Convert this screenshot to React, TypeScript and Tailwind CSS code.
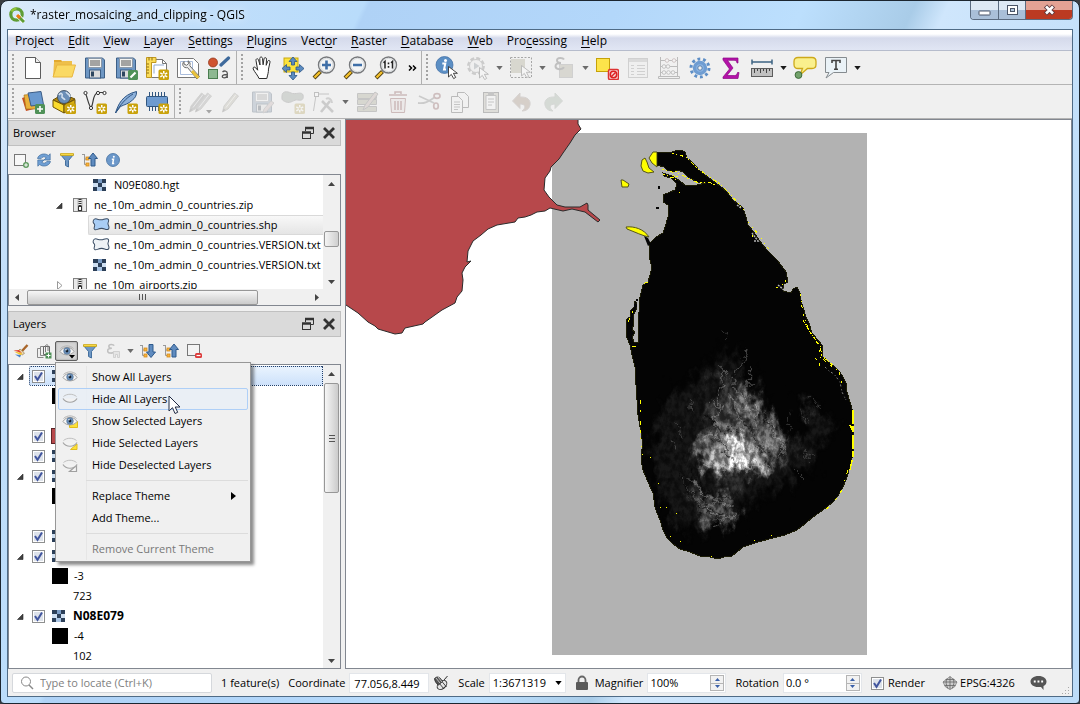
import React, { useState } from "react";

type IconProps = { children: React.ReactNode; size?: "sm" | "md" | "lg"; dim?: boolean };

const sizes = { sm: "size-4", md: "size-[18px]", lg: "size-6" };

function Icon({ children, size = "lg", dim = false }: IconProps) {
  return (
    <svg
      viewBox={size === "lg" ? "0 0 24 24" : "0 0 16 16"}
      className={`${sizes[size]} shrink-0 ${dim ? "opacity-30 saturate-50" : ""}`}
      fill="none"
      aria-hidden="true"
    >
      {children}
    </svg>
  );
}

/* ---------- shared icon parts ---------- */

const NewBadge = () => (
  <g>
    <rect x="13.5" y="13.5" width="10.500" height="10.500" rx="1.5" fill="#c9a20c" />
    <path d="M18.750 15v7.500M15.300 16.800l6.900 4M22.200 16.800l-6.900 4" stroke="#fff" strokeWidth="1.5" />
    <circle cx="18.750" cy="18.800" r="1.2" fill="#c9a20c" />
  </g>
);

const Floppy = () => (
  <g>
    <path d="M2.5 2h17l2 2v18h-19z" fill="#6e97c4" stroke="#3d5f86" />
    <rect x="5.500" y="2.500" width="13" height="9" fill="#f3f3f0" stroke="#8a98a8" />
    <path d="M7 5h10M7 7h10M7 9h10" stroke="#555" />
    <rect x="6.500" y="14" width="11" height="8" fill="#dcdcdc" stroke="#3d5f86" />
    <rect x="8" y="15.500" width="3" height="5" fill="#2e4760" />
  </g>
);

const Loupe = ({ children }: { children: React.ReactNode }) => (
  <g>
    <path d="M8.500 15.500 2 22" stroke="#4a3b10" strokeWidth="4" />
    <path d="M8 16 2.500 21.500" stroke="#f4c12c" strokeWidth="2.400" />
    <circle cx="14.500" cy="9" r="8" fill="#f4f5f6" stroke="#77797c" strokeWidth="1.400" />
    <circle cx="14.500" cy="9" r="6.600" stroke="#d5d8da" />
    {children}
  </g>
);

const Pointer = ({ x = 12, y = 11 }: { x?: number; y?: number }) => (
  <path
    transform={`translate(${x} ${y})`}
    d="M.5.5v10.500l2.800-2.600 2.400 4.200 2-1.200L5.400 7.300h4z"
    fill="#fff"
    stroke="#333"
    strokeWidth=".9"
  />
);

const Pencil = ({ tone = "#d6d3c4" }: { tone?: string }) => (
  <g>
    <path d="m3.500 22 1.500-6L15.500 3l4 3L9 19z" fill={tone} stroke="#8f8d85" />
    <path d="m3.500 22 1-3.600 2 1.600z" fill="#666" />
    <path d="m7 17.500 10-13" stroke="#fff" strokeOpacity=".7" />
  </g>
);

const EyeGlyph = () => (
  <g>
    <path d="M1 8.500C4 3 12 3 15 8.500 12 13 4 13 1 8.500z" fill="#f6f6f6" stroke="#a3a3a3" />
    <path d="M1.500 5.500C5 2 11 2 14.500 5.500" stroke="#b5b5b5" />
    <circle cx="8" cy="8" r="3.300" fill="#6e93bd" stroke="#45668c" strokeWidth=".6" />
    <circle cx="8" cy="8" r="1.400" fill="#15202c" />
    <circle cx="7" cy="6.800" r=".7" fill="#fff" />
  </g>
);

const ClosedEyeGlyph = () => (
  <g stroke="#a3a3a3">
    <path d="M1.500 5.500C5 2.500 11 2.500 14.500 5.500" stroke="#c0c0c0" />
    <path d="M1 7.500C4 12.500 12 12.500 15 7.500" fill="#f2f2f2" strokeWidth="1.200" />
  </g>
);

const Epsilon = ({ size = 17 }: { size?: number }) => (
  <path
    transform={`scale(${size / 17})`}
    d="M12 3.500c-1-2-7-2.500-7 .8 0 2 2 2.700 4 2.700-3.500 0-5.500 1-5.500 3.300 0 3.700 7 3.700 8.500 1"
    stroke="#555"
    strokeWidth="2"
  />
);

const RasterGlyph = () => (
  <g shapeRendering="crispEdges">
    <rect x="1" y="2" width="13" height="12" fill="#a9c4e3" />
    <path d="M1 2h5v4H1zM10 2h4v4h-4zM6 6h4v4H6zM1 10h4v4H1zM10 10h4v4h-4z" fill="#2c3f58" />
    <path d="M10 6h4v4h-4zM1 6h5v4H1z" fill="#cfdff1" />
    <path d="M6 2h4v4H6z" fill="#7b9dc6" />
  </g>
);

const PolyGlyph = ({ fill }: { fill: string }) => (
  <path
    d="M1 5c0-2.200 1.800-2.900 3.800-2.200 2 .7 3.700.9 5.700.1 2.200-.9 4.500-.5 4.300 1.300-.1 1.200-.8 1.700-.6 2.900.2 1.300 1.100 2 .9 3.500-.2 1.800-2 1.700-3.900.9-2.200-.9-4.400-.5-6.400.4-1.800.8-3.600.3-2.800-1.900.5-1.300.7-1.700.2-2.600C1.800 6.700 1 6.300 1 5z"
    fill={fill}
    stroke="#3d4f66"
    strokeWidth=".9"
  />
);

const ZipGlyph = () => (
  <g>
    <rect x="1.500" y="1.500" width="13" height="13" fill="#e9e9e9" stroke="#808080" />
    <path d="M6 2v12M10 2v12" stroke="#b5b5b5" />
    <path d="M8 2v8" stroke="#333" strokeWidth="3" strokeDasharray="1 1" />
    <rect x="6.500" y="9.500" width="3" height="4" fill="#fff" stroke="#333" />
  </g>
);

const Funnel = () => (
  <g>
    <path d="M1.500 2.500h13L9.500 8.500V15l-3-1.500v-5z" fill="#6e97c4" stroke="#44709f" />
    <path d="M1.500 1.500h13v2h-13z" fill="#f7d844" stroke="#c9a20c" strokeWidth=".7" />
  </g>
);

const TreeArrow = ({ up }: { up: boolean }) => (
  <g>
    <path d="M0 2.500h3M2.500 2.500v10M2.500 7h3M2.500 12.500h3" stroke="#999" />
    <rect x="4" y="5" width="3" height="3" fill="#f7b43c" stroke="#d58a1c" strokeWidth=".8" />
    <rect x="4" y="11" width="3" height="3" fill="#f7b43c" stroke="#d58a1c" strokeWidth=".8" />
    <path
      d={up ? "M11 1 15.500 6.500H13V14H9V6.500H6.500z" : "M11 14.500 15.500 9H13V1.500H9V9H6.500z"}
      fill="#5f8bbf"
      stroke="#2f5a8c"
    />
  </g>
);

/* ---------- controls ---------- */

function Tool({ label, children, disabled }: { label: string; children: React.ReactNode; disabled?: boolean }) {
  return (
    <button aria-label={label} disabled={disabled} className="flex h-8 w-[31px] items-center justify-center">
      <Icon dim={disabled}>{children}</Icon>
    </button>
  );
}

function More({ label, dim }: { label: string; dim?: boolean }) {
  return (
    <button aria-label={label} className="flex h-8 w-3 items-center justify-center">
      <svg viewBox="0 0 8 5" className="h-1 w-[7px]" aria-hidden="true">
        <path d="M0 0h8L4 5z" fill={dim ? "#6b6b6b" : "#1a1a1a"} />
      </svg>
    </button>
  );
}

function Handle() {
  return (
    <svg viewBox="0 0 9 28" className="h-7 w-[9px] shrink-0" aria-hidden="true">
      <path d="M5 0v28" stroke="#a3a3a3" strokeWidth="2" strokeDasharray="2 2" />
    </svg>
  );
}

function SmallTool({ label, children, dim }: { label: string; children: React.ReactNode; dim?: boolean }) {
  return (
    <button aria-label={label} className="flex h-5 w-[23px] items-center justify-center">
      <Icon size="sm" dim={dim}>
        {children}
      </Icon>
    </button>
  );
}

function TickBox({ label, text }: { label: string; text?: string }) {
  return (
    <label className="flex items-center gap-1">
      <span className="grid size-[13px]">
        <input
          type="checkbox"
          defaultChecked
          aria-label={label}
          className="peer col-start-1 row-start-1 size-[13px] appearance-none border border-[#8e8f8f] bg-[#dde2ea] outline outline-1 -outline-offset-2 outline-white"
        />
        <svg
          viewBox="0 0 13 13"
          className="pointer-events-none invisible col-start-1 row-start-1 peer-checked:visible"
          aria-hidden="true"
        >
          <path d="m3 6 2.500 3.800L10 2.500" fill="none" stroke="#42569e" strokeWidth="2" />
        </svg>
      </span>
      {text}
    </label>
  );
}

function PanelHeader({ title }: { title: string }) {
  return (
    <div className="flex h-[26px] shrink-0 items-center border border-[#c0c0c0] bg-[#dadada] pl-1">
      <h2 className="flex-1">{title}</h2>
      <button aria-label={`Float ${title}`} className="flex w-5 justify-center">
        <svg viewBox="0 0 14 14" className="size-3.5" fill="none" aria-hidden="true">
          <path d="M4.500 5V1.500h8v6H9" stroke="#333" />
          <path d="M4 2h9" stroke="#333" strokeWidth="2.500" />
          <rect x="1.500" y="6.500" width="8" height="6" stroke="#333" />
          <path d="M1 6.500h9" stroke="#333" strokeWidth="2.500" />
        </svg>
      </button>
      <button aria-label={`Close ${title}`} className="flex w-[22px] justify-center">
        <svg viewBox="0 0 14 14" className="size-3.5" aria-hidden="true">
          <path d="m2 2 10 10M12 2 2 12" stroke="#333" strokeWidth="2.800" />
        </svg>
      </button>
    </div>
  );
}

function ScrollArrow({ dir }: { dir: "up" | "down" | "left" | "right" }) {
  const d = { up: "M0 6h7L3.500 2z", down: "M0 2h7L3.500 6z", left: "M5 0v7L1 3.500z", right: "M2 0v7l4-3.500z" }[dir];
  return (
    <button aria-label={`Scroll ${dir}`} className="flex size-4 shrink-0 items-center justify-center">
      <svg viewBox="0 0 7 7" className="size-[7px]" aria-hidden="true">
        <path d={d} fill="#444" />
      </svg>
    </button>
  );
}

const Twist = ({ open }: { open: boolean }) => (
  <svg viewBox="0 0 9 9" className="size-[9px] shrink-0" aria-hidden="true">
    {open ? (
      <path d="M7 2v5.500H1.500z" fill="#404040" stroke="#262626" strokeWidth=".6" />
    ) : (
      <path d="m2.500.5 4.500 4-4.500 4z" fill="#fff" stroke="#999" />
    )}
  </svg>
);

/* ---------- title bar and menus ---------- */

function QgisLogo() {
  return (
    <svg viewBox="0 0 16 16" className="size-4" fill="none" aria-hidden="true">
      <circle cx="7.500" cy="7.500" r="5.700" stroke="#5f9d35" strokeWidth="3.200" />
      <path d="M2.500 4.500a6 6 0 0 1 5-3" stroke="#93c53a" strokeWidth="2" />
      <path d="m8 8 7 7" stroke="#fff" strokeWidth="4.500" />
      <path d="m8.500 8.500 6.500 6.500" stroke="#5f9d35" strokeWidth="3" />
      <path d="m8 8 3 3" stroke="#ee7913" strokeWidth="3" />
    </svg>
  );
}

function TitleBar() {
  return (
    <header className="flex h-7 shrink-0 items-start justify-between">
      <div className="flex h-7 items-center gap-[5px] pl-0.5">
        <QgisLogo />
        <h1 className="drop-shadow-[0_0_4px_#ffffff]">*raster_mosaicing_and_clipping - QGIS</h1>
      </div>
      <div className="flex h-[19px] overflow-hidden rounded-b border border-t-0 border-[#5a6b80]">
        <button
          aria-label="Minimize"
          className="flex w-7 items-center justify-center border-r border-[#5a6b80] bg-linear-to-b from-[#dde9f5] from-50% to-[#a9bfd8] to-50%"
        >
          <svg viewBox="0 0 13 12" className="h-3 w-[13px]" aria-hidden="true">
            <rect x="1" y="7" width="11" height="4" rx=".5" fill="#fff" stroke="#4a5568" />
          </svg>
        </button>
        <button
          aria-label="Maximize"
          className="flex w-[27px] items-center justify-center border-r border-[#5a6b80] bg-linear-to-b from-[#dde9f5] from-50% to-[#a9bfd8] to-50%"
        >
          <svg viewBox="0 0 13 12" className="h-3 w-[13px]" aria-hidden="true">
            <rect x="1.500" y="1.500" width="10" height="9" fill="#fff" stroke="#4a5568" />
            <rect x="4.500" y="4.500" width="4" height="3" fill="#b5c8de" stroke="#4a5568" />
          </svg>
        </button>
        <button
          aria-label="Close"
          className="flex w-[46px] items-center justify-center bg-linear-to-b from-[#e3a294] from-50% to-[#bb3a22] to-50%"
        >
          <svg viewBox="0 0 13 12" className="h-3 w-[13px]" aria-hidden="true">
            <path d="m2.500 2 8 8M10.500 2l-8 8" stroke="#5b3a3f" strokeWidth="4.500" />
            <path d="m3 2.500 7 7M10 2.500l-7 7" stroke="#fff" strokeWidth="2.600" />
          </svg>
        </button>
      </div>
    </header>
  );
}

const menus: [string, string, string][] = [
  ["Pro", "j", "ect"],
  ["", "E", "dit"],
  ["", "V", "iew"],
  ["", "L", "ayer"],
  ["", "S", "ettings"],
  ["", "P", "lugins"],
  ["Vect", "o", "r"],
  ["", "R", "aster"],
  ["", "D", "atabase"],
  ["", "W", "eb"],
  ["Pro", "c", "essing"],
  ["", "H", "elp"],
];

function MenuBar() {
  return (
    <nav className="flex h-[21px] shrink-0 border-b border-[#b6bccc] bg-linear-to-b from-white from-20% via-[#d5daeb] via-40% to-[#e1e6f4] pt-0.5">
      {menus.map(([a, key, b]) => (
        <button key={a + key + b} className="px-[7px]">
          {a}
          <u className="underline-offset-2">{key}</u>
          {b}
        </button>
      ))}
    </nav>
  );
}

/* ---------- toolbars ---------- */

const Bar = ({ children }: { children: React.ReactNode }) => (
  <div className="flex h-[34px] shrink-0 border-b border-[#b4b4b4]">{children}</div>
);

const Group = ({ children, last }: { children: React.ReactNode; last?: boolean }) => (
  <div className={`flex items-center ${last ? "" : "border-r border-[#b0b0b0] pr-0.5"}`}>
    <Handle />
    {children}
  </div>
);

function MainToolbar() {
  return (
    <Bar>
      <Group>
        <Tool label="New project">
          <path d="M4.500 1.500h10l5 5v16h-15z" fill="#fff" stroke="#5c5c5c" />
          <path d="M14.500 1.500v5h5" fill="#eee" stroke="#5c5c5c" />
        </Tool>
        <Tool label="Open project">
          <path d="M2 6V4h7l2 2h9v4H2z" fill="#e2a92f" />
          <path d="M1 21 2 6h7l2-1h9v4" fill="#eebf4a" />
          <path d="M1 21 5 9h18.500L20 21z" fill="#fad964" stroke="#e9b63e" />
        </Tool>
        <Tool label="Save project">
          <Floppy />
        </Tool>
        <Tool label="Save project as">
          <Floppy />
          <rect x="14" y="14" width="10" height="10" rx="1.500" fill="#4f9158" />
          <path d="m16.500 21.500 5-5" stroke="#fff" strokeWidth="2.200" />
        </Tool>
        <Tool label="New print layout">
          <path d="M6.500 3.500h11l4 4v14h-15z" fill="#fff" stroke="#777" />
          <path d="M17.500 3.500v4h4" stroke="#777" />
          <path d="M1.500 1.500h9.500v5H6.500v15h-5z" fill="#fbdc58" stroke="#c09820" />
          <path d="M4 1.500v3M7 1.500v3M1.500 8h2.500M1.500 11h2.500M1.500 14h2.500M1.500 17h2.500" stroke="#8f6f10" />
          <path d="M9 17.500V9h10" stroke="#8fa9cf" />
          <NewBadge />
        </Tool>
        <Tool label="Layout manager">
          <path d="M1.500 2.500h16l5 5v14h-21z" fill="#fff" stroke="#777" />
          <path d="M4.500 5.500h12v13h-12z" stroke="#a9bcdc" />
          <path
            d="M8 5.500c-2 2-1.500 5 1 6 1 .4 2 .2 2.500 0L21 23l2.500-2.500L13.800 9.800c.8-2 .2-4-1.800-5l.5 3-2 1.500-2.500-1.300z"
            fill="#ececec"
            stroke="#6a6a6a"
          />
          <path d="m16 15 6.500 7" stroke="#e9c23a" strokeWidth="3" />
        </Tool>
        <Tool label="Style manager">
          <circle cx="6" cy="6.500" r="4.500" fill="#cf5430" stroke="#94391d" strokeWidth=".8" />
          <path d="m14 9 7.500-7" stroke="#3f6a9c" strokeWidth="3.200" strokeLinecap="round" />
          <rect x="1.500" y="13.500" width="9" height="9" fill="#8db891" stroke="#4a7d50" />
          <path
            d="M15.500 16c1.500-1.600 4.800-1.300 4.800 1.200V22M20.300 18.500c-3 0-5 .2-5 1.900 0 1.900 3.700 1.900 5-.3"
            stroke="#555"
            strokeWidth="1.300"
          />
        </Tool>
      </Group>
      <Group>
        <Tool label="Pan map">
          <path
            d="M8 22.500c-1-3-4.500-6.500-5.800-9.500-.7-2 1.500-2.500 2.500-1.200l2 2.400L5 4.500c-.3-2 2-2.400 2.500-.6L9 9 8.800 2.500c0-2 2.500-2 2.700 0l.6 6.300.9-6c.3-1.800 2.700-1.400 2.500.4L15.200 9.300l1.500-4c.6-1.600 2.700-.9 2.300.8l-1.500 7c0 3.500-.8 5.500-1.700 9.400z"
            transform="translate(1 0)"
            fill="#fff"
            stroke="#2b2b2b"
            strokeWidth="1"
          />
        </Tool>
        <Tool label="Pan map to selection">
          <rect x="3" y="2" width="14" height="14" fill="#fbe33d" stroke="#c9a80c" />
          <path
            d="M12 1 16 5.500h-2.500V9h-3V5.500H8zM12 24l-4-4.500h2.500V16h3v3.500H16zM1 12.500l4.500-4V11H9v3H5.500v2.500zM23 12.500l-4.500-4V11H15v3h3.500v2.500z"
            fill="#5b8bc0"
            stroke="#2c5687"
            strokeWidth=".8"
          />
        </Tool>
        <Tool label="Zoom in">
          <Loupe>
            <path d="M14.500 4.500v9M10 9h9" stroke="#3f6fa8" strokeWidth="2.600" />
          </Loupe>
        </Tool>
        <Tool label="Zoom out">
          <Loupe>
            <path d="M10 9h9" stroke="#3f6fa8" strokeWidth="2.600" />
          </Loupe>
        </Tool>
        <Tool label="Zoom to native resolution">
          <Loupe>
            <path d="M9.500 6.800 11 5.500V12.500M17 6.800l1.500-1.300v7" stroke="#222" strokeWidth="1.500" />
            <path d="M14.500 6.500v1.800M14.500 10v1.800" stroke="#222" strokeWidth="1.600" />
          </Loupe>
        </Tool>
        <button aria-label="More tools" className="flex h-8 w-[18px] items-center justify-center pl-1">
          <svg viewBox="0 0 9 8" className="h-2 w-[9px]" fill="none" aria-hidden="true">
            <path d="m1 1.500 2.500 2.500L1 6.500M5 1.500 7.500 4 5 6.500" stroke="#000" strokeWidth="1.500" />
          </svg>
        </button>
      </Group>
      <Group last>
        <Tool label="Identify features">
          <circle cx="9.500" cy="9" r="8.500" fill="#5c8fc4" stroke="#3c6ca3" strokeWidth=".7" />
          <circle cx="10.500" cy="4.500" r="1.500" fill="#fff" />
          <path d="M7.300 7.500h3l-1.300 6h2" stroke="#fff" strokeWidth="2" />
          <Pointer x={13} y={10} />
        </Tool>
        <Tool label="Run feature action" disabled>
          <circle cx="10" cy="10" r="7.700" stroke="#777" strokeWidth="2.400" strokeDasharray="4 2.050" />
          <circle cx="10" cy="10" r="6.500" fill="#eee" stroke="#777" />
          <path d="M8 6.500 13.500 10 8 13.500z" fill="#789" />
          <Pointer x={13} y={11} />
        </Tool>
        <More label="Actions" dim />
        <Tool label="Select features" disabled>
          <rect x="2" y="3" width="14" height="14" fill="#a89f6c" />
          <path d="M1.500 1.500h21v20h-21z" stroke="#000" strokeDasharray="2 1.500" />
          <Pointer x={12} y={9} />
        </Tool>
        <More label="Selection modes" dim />
        <Tool label="Select by expression" disabled>
          <rect x="7.500" y="8.500" width="13" height="13" fill="#a89f78" stroke="#888" />
          <Epsilon />
        </Tool>
        <More label="Expression options" dim />
        <Tool label="Deselect features">
          <rect x="1.500" y="2.500" width="13" height="13" fill="#fde44a" stroke="#c6a208" />
          <rect x="13.500" y="13.500" width="10" height="10" rx="1.500" fill="#f8dcdc" stroke="#d33" strokeWidth="1.500" />
          <circle cx="18.500" cy="18.500" r="3.200" stroke="#d22" strokeWidth="1.600" />
          <path d="m16.500 20.500 4-4" stroke="#d22" strokeWidth="1.500" />
        </Tool>
        <Tool label="Attribute table" disabled>
          <rect x="2.500" y="2.500" width="19" height="19" fill="#eee" stroke="#888" />
          <path d="M3 4.500h18" stroke="#aaa" strokeWidth="3" />
          <path d="M5 9.500h3M11 9.500h8M5 12.500h3M11 12.500h8M5 15.500h3M11 15.500h8M5 18.500h3M11 18.500h8" stroke="#888" />
        </Tool>
        <Tool label="Field calculator" disabled>
          <path d="M3.500 1v20M20.500 1v20M3 4.500h18M3 10.500h18M3 16.500h18M1.500 20.500h21v2h-21z" stroke="#444" />
          <g fill="#fff" stroke="#555">
            <circle cx="10" cy="4.500" r="1.800" stroke="#955" />
            <circle cx="17" cy="4.500" r="1.800" stroke="#955" />
            <circle cx="7" cy="10.500" r="1.800" />
            <circle cx="11" cy="10.500" r="1.800" />
            <circle cx="7" cy="16.500" r="1.800" />
            <circle cx="11.500" cy="16.500" r="1.800" />
            <circle cx="16" cy="16.500" r="1.800" />
          </g>
        </Tool>
        <Tool label="Toolbox">
          <circle cx="12" cy="12" r="9" stroke="#5d8ec6" strokeWidth="3" strokeDasharray="2.800 2.855" />
          <circle cx="12" cy="12" r="5.500" fill="#8db4e2" stroke="#6f9dd2" strokeWidth="3.400" />
          <circle cx="12" cy="12" r="2.200" fill="#f0f0f0" stroke="#44709f" strokeWidth=".8" />
        </Tool>
        <Tool label="Statistical summary">
          <path
            d="M19 2v5h-1c-.3-2-1.200-2.700-3-2.700H8.500L14 12l-6 7.500h7.500c1.800 0 2.500-1 3-3H20L19 22.500H4V21l6.500-8L4 4V2z"
            fill="#b412a8"
            stroke="#8b0a84"
            strokeWidth=".7"
          />
        </Tool>
        <Tool label="Measure line">
          <path d="M2 6h20M2 3.500v5M22 3.500v5" stroke="#3d6382" strokeWidth="1.500" />
          <rect x="1.500" y="12.500" width="21" height="8" fill="#c0c0c0" stroke="#5c5c5c" />
          <path d="M4.500 13v4M7.500 13v2M10.500 13v4M13.500 13v2M16.500 13v4M19.500 13v2" stroke="#444" />
        </Tool>
        <More label="Measure modes" />
        <Tool label="Map tips">
          <path
            d="M5 1.500h14c2.500 0 4 1.500 4 4v3c0 2.500-1.500 4-4 4h-4.500L7 19l2.500-6.500H5c-2.500 0-4-1.500-4-4v-3c0-2.500 1.500-4 4-4z"
            fill="#faf08d"
            stroke="#cda91a"
            strokeWidth="1.300"
          />
          <circle cx="5.500" cy="19" r="3.400" fill="#73a26c" stroke="#3e6b38" />
        </Tool>
        <Tool label="Text annotation">
          <path d="M1.500 1.500h21v15h-13L2 22l3-5.500H1.500z" fill="#eaf2f7" stroke="#858b8f" />
          <path d="M8 7V4.500h8V7M12 4.500V13M10 13.300h4" stroke="#444" strokeWidth="1.600" />
        </Tool>
        <More label="Annotation tools" />
      </Group>
    </Bar>
  );
}

function EditToolbar() {
  return (
    <Bar>
      <Group>
        <Tool label="Data source manager">
          <path d="m1 8 12-4 4 14-12 3z" fill="#c64f22" />
          <path d="m3 5 12-1 2 15H5z" fill="#eab13a" stroke="#a8741a" strokeWidth=".7" />
          <path d="m7 3 13-1.500 2.500 13L10 16z" fill="#6a99cf" stroke="#3c5d86" />
          <rect x="14" y="14" width="10" height="10" rx="1.500" fill="#4f9158" />
          <path d="M19 16v6M16 19h6" stroke="#fff" strokeWidth="1.600" />
        </Tool>
        <Tool label="New GeoPackage layer">
          <path d="m1 10 10-6 12 5-11 6z" fill="#b3880b" stroke="#6d5206" />
          <circle cx="12" cy="7" r="6.500" fill="#6b8fb8" stroke="#345" strokeWidth=".8" />
          <path d="M7 5c2-3 4-1 3 1s2 2 3 4M14 2c1 2 4 2 4 5" stroke="#d3e0ee" strokeWidth="1.600" />
          <path d="m1 10 11 5v8L1 17z" fill="#fbdb2c" stroke="#6d5206" />
          <path d="m12 15 11-5.500V17l-11 6z" fill="#d8ae13" stroke="#6d5206" />
          <NewBadge />
        </Tool>
        <Tool label="New shapefile layer">
          <path d="M2.500 3.500c2 4 3 12 5.500 14C11 14 9 4 15 2.500h6" stroke="#3c3c3c" strokeWidth="1.200" />
          <g fill="#fff" stroke="#333">
            <circle cx="2.500" cy="3" r="1.600" />
            <circle cx="8" cy="18" r="1.600" />
            <circle cx="15" cy="3" r="1.600" />
            <circle cx="21.500" cy="3" r="1.600" />
          </g>
          <NewBadge />
        </Tool>
        <Tool label="New SpatiaLite layer">
          <path d="M1.500 23C4 15 8 5 22.500 1.500c.5 4-2 7-4 8.500-4 4-8 4.500-12 6.500z" fill="#8eb1da" stroke="#2f5684" />
          <path d="M1.500 23C6 15 12 8 19 4" stroke="#2f5684" />
          <NewBadge />
        </Tool>
        <Tool label="New temporary layer">
          <path d="M4.500 2v19M7.500 2v19M10.500 2v19M13.500 2v19M16.500 2v19M19.500 2v19" stroke="#31567f" />
          <rect x="1.500" y="6.500" width="21" height="10" rx="1" fill="#6e9bd0" stroke="#31567f" />
          <NewBadge />
        </Tool>
      </Group>
      <Group last>
        <Tool label="Current edits" disabled>
          <g transform="translate(-2 0)">
            <Pencil tone="#888" />
          </g>
          <g transform="translate(4 0)">
            <Pencil tone="#999" />
          </g>
          <path d="M18 20h6l-3 3.500z" fill="#000" />
        </Tool>
        <Tool label="Toggle editing" disabled>
          <Pencil tone="#b5b08f" />
        </Tool>
        <Tool label="Save layer edits" disabled>
          <Floppy />
          <path d="m13 23 1-4 7-8 3 2-7 8z" fill="#caa" stroke="#888" />
        </Tool>
        <Tool label="Add polygon feature" disabled>
          <path d="M1 6c0-5 5-5 9-3s11-2 12 2-1 6-5 5-7 4-12 2-4-3-4-6z" fill="#8b9a86" stroke="#777" />
          <NewBadge />
        </Tool>
        <Tool label="Vertex tool" disabled>
          <path d="M4 5 1.500 21M4 4h13" stroke="#666" />
          <rect x="2.500" y="2.500" width="4" height="4" fill="#fff" stroke="#555" />
          <path d="m9 22 9-11M10 11l11 11" stroke="#777" strokeWidth="2.600" />
          <path d="M14 9c3-2 6 1 6 4" stroke="#888" strokeWidth="2" />
        </Tool>
        <More label="Vertex tools" dim />
        <Tool label="Modify attributes" disabled>
          <path d="M2.500 3.500h19v5h-19zM2.500 9.500h19v5h-19zM2.500 16.500h19v5h-19z" fill="#a3a272" stroke="#666" />
          <path d="m8 20 2-5 10-13 3 2-10 13z" fill="#c9a090" stroke="#666" />
        </Tool>
        <Tool label="Delete selected" disabled>
          <path d="M4.500 8.500h15l-1 14h-13z" fill="#eadada" stroke="#a33" />
          <path d="M3 5h18M9 4V2h6v2M9 11v9M12 11v9M15 11v9" stroke="#a33" strokeWidth="1.500" />
        </Tool>
        <Tool label="Cut features" disabled>
          <path d="m2 6 15 7M1 13c7 1 11-2 17-6" stroke="#777" strokeWidth="1.800" />
          <ellipse cx="20" cy="6" rx="3" ry="2.300" stroke="#a44" strokeWidth="1.700" />
          <ellipse cx="19" cy="16" rx="2.300" ry="3" stroke="#a44" strokeWidth="1.700" />
        </Tool>
        <Tool label="Copy features" disabled>
          <path d="M9.500 2.500h7l4 4v11h-11z" fill="#f6f6f6" stroke="#444" />
          <path d="M3.500 6.500h7l4 4v12h-11z" fill="#f6f6f6" stroke="#444" />
          <path d="M6 12h6M6 14.500h6M6 17h6M6 19.500h4" stroke="#666" />
        </Tool>
        <Tool label="Paste features" disabled>
          <rect x="4.500" y="2.500" width="15" height="20" fill="#b9b39c" stroke="#444" />
          <path d="M7 5.500h10v14H7z" fill="#f7f7f7" stroke="#666" />
          <path d="M9 2h6v3H9z" fill="#666" />
          <path d="M9 9h6M9 12h6M9 15h4" stroke="#666" />
        </Tool>
        <Tool label="Undo" disabled>
          <path d="M10 3v4c7-.5 11 3 10 8-.8 4-4 6-8 6 4-3 4-7-2-7v4.500L2.500 11z" fill="#b0805f" stroke="#a08a80" />
        </Tool>
        <Tool label="Redo" disabled>
          <path d="M14 3v4C7 6.500 3 10 4 15c.8 4 4 6 8 6-4-3-4-7 2-7v4.500l7.500-7.500z" fill="#8fae8f" stroke="#8f9f90" />
        </Tool>
      </Group>
    </Bar>
  );
}

/* ---------- browser panel ---------- */

type Row = { name: string; kind: "raster" | "zip" | "shp" | "txt"; depth: 1 | 2; open?: boolean; selected?: boolean };

const rows: Row[] = [
  { name: "N09E080.hgt", kind: "raster", depth: 2 },
  { name: "ne_10m_admin_0_countries.zip", kind: "zip", depth: 1, open: true },
  { name: "ne_10m_admin_0_countries.shp", kind: "shp", depth: 2, selected: true },
  { name: "ne_10m_admin_0_countries.VERSION.txt", kind: "txt", depth: 2 },
  { name: "ne_10m_admin_0_countries.VERSION.txt", kind: "raster", depth: 2 },
  { name: "ne_10m_airports.zip", kind: "zip", depth: 1, open: false },
];

function BrowserPanel() {
  return (
    <section className="flex h-[186px] shrink-0 flex-col">
      <PanelHeader title="Browser" />
      <div className="flex h-7 shrink-0 items-center pl-px">
        <SmallTool label="Add layer">
          <rect x="1.500" y="2.500" width="11" height="11" fill="#f7f7f7" stroke="#777" />
          <circle cx="13" cy="13" r="3" fill="#5f9a5f" />
          <path d="M13 11.200v3.600M11.200 13h3.600" stroke="#fff" />
        </SmallTool>
        <SmallTool label="Refresh">
          <path
            d="M1.500 6.500C2.500 2 9 .5 12.300 3.500l1.900-1.700V8H8l2.200-2.200C8.500 4.200 6 4.700 5 6.800z"
            fill="#6f9fd4"
            stroke="#44709f"
            strokeWidth=".7"
          />
          <path
            d="M14.500 9.500c-1 4.500-7.500 6-10.800 3l-1.900 1.700V8H8l-2.200 2.200C7.500 11.800 10 11.300 11 9.200z"
            fill="#6f9fd4"
            stroke="#44709f"
            strokeWidth=".7"
          />
        </SmallTool>
        <SmallTool label="Filter browser">
          <Funnel />
        </SmallTool>
        <SmallTool label="Collapse all">
          <TreeArrow up />
        </SmallTool>
        <SmallTool label="Show properties">
          <circle cx="8" cy="8" r="6.500" fill="#6c98ca" stroke="#44709f" strokeWidth=".8" />
          <circle cx="8.800" cy="4.700" r="1" fill="#fff" />
          <path d="M6.800 7.200h1.700l-.8 4.300h1.500" stroke="#fff" strokeWidth="1.500" />
        </SmallTool>
      </div>
      <div className="flex min-h-0 flex-1 flex-col border border-[#828790] bg-white">
        <div className="flex min-h-0 flex-1">
          <ul className="min-w-0 flex-1 overflow-hidden">
            {rows.map((row, i) => (
              <li key={i} className={`flex h-5 items-center ${row.depth === 1 ? "pl-[46px]" : "pl-[79px]"}`}>
                {row.depth === 1 && (
                  <span className="mr-[3px] flex w-2.5">
                    <Twist open={!!row.open} />
                  </span>
                )}
                <span
                  className={`flex h-5 min-w-0 flex-1 items-center gap-1 rounded-l-xs border border-r-0 pl-[3px] whitespace-nowrap ${
                    row.selected
                      ? "border-[#d9d9d9] bg-linear-to-b from-[#f8f8f8] to-[#e5e5e5]"
                      : "border-transparent"
                  }`}
                >
                  <span className="flex w-[18px] shrink-0">
                    <Icon size={row.kind === "shp" || row.kind === "txt" ? "md" : "sm"}>
                      {row.kind === "raster" && <RasterGlyph />}
                      {row.kind === "zip" && <ZipGlyph />}
                      {row.kind === "shp" && <PolyGlyph fill="#a9cdf5" />}
                      {row.kind === "txt" && <PolyGlyph fill="#eef2f6" />}
                    </Icon>
                  </span>
                  {row.name}
                </span>
              </li>
            ))}
          </ul>
          <div className="flex w-[17px] shrink-0 flex-col items-center bg-[#f0f0f0]">
            <ScrollArrow dir="up" />
            <div className="flex-3" />
            <div className="h-4 w-[15px] rounded-xs border border-[#979797] bg-linear-to-r from-[#f4f4f4] to-[#cfcfcf]" />
            <div className="flex-2" />
            <ScrollArrow dir="down" />
          </div>
        </div>
        <div className="flex h-4 shrink-0 items-center bg-[#f0f0f0] pr-4">
          <ScrollArrow dir="left" />
          <div className="mx-0.5 flex h-[15px] w-[231px] items-center justify-center gap-0.5 rounded-xs border border-[#979797] bg-linear-to-b from-[#f6f6f6] to-[#cbcbcb]">
            <i className="h-1.5 w-px bg-[#555]" />
            <i className="h-1.5 w-px bg-[#555]" />
            <i className="h-1.5 w-px bg-[#555]" />
          </div>
          <div className="flex-1" />
          <ScrollArrow dir="right" />
        </div>
      </div>
    </section>
  );
}

/* ---------- layers panel ---------- */

const SelectedMark = ({ fill, stroke }: { fill: string; stroke: string }) => (
  <path d="M14.500 8.500v6H7.500z" fill={fill} stroke={stroke} strokeWidth="1.200" />
);

const themeItems: { label: string; icon: React.ReactNode; active?: boolean }[] = [
  { label: "Show All Layers", icon: <EyeGlyph /> },
  { label: "Hide All Layers", icon: <ClosedEyeGlyph />, active: true },
  {
    label: "Show Selected Layers",
    icon: (
      <>
        <path d="M7.500 8.500h8v6h-8z" fill="#fde13a" stroke="#e0bd1d" />
        <EyeGlyph />
        <path d="M9 14h6v-4z" fill="#fde13a" />
      </>
    ),
  },
  {
    label: "Hide Selected Layers",
    icon: (
      <>
        <path d="M8.500 14.500h6.500V9z" fill="#fde13a" stroke="#e0bd1d" />
        <ClosedEyeGlyph />
      </>
    ),
  },
  {
    label: "Hide Deselected Layers",
    icon: (
      <>
        <SelectedMark fill="#f4f4f4" stroke="#a0a0a0" />
        <ClosedEyeGlyph />
      </>
    ),
  },
];

function ThemeMenu() {
  return (
    <div
      role="menu"
      className="absolute top-full left-0 z-10 mt-px w-[196px] border border-[#979797] bg-[#f0f0f0] px-0.5 pt-[3px] pb-px shadow-[3px_3px_3px_rgba(0,0,0,0.45)]"
    >
      <div className="bg-linear-to-r from-transparent from-[28px] via-[#dcdcdc] via-[28px] to-transparent to-[29px]">
        {themeItems.map((item) => (
          <button
            key={item.label}
            role="menuitem"
            className={`flex h-[22px] w-full items-center gap-3.5 rounded-xs border pl-[3px] text-left whitespace-nowrap ${
              item.active ? "border-[#aecff7] bg-[#e9eff6]/80" : "border-transparent"
            }`}
          >
            <Icon size="sm">{item.icon}</Icon>
            {item.label}
          </button>
        ))}
        <hr className="my-1 ml-7 border-[#dcdcdc]" />
        <button role="menuitem" className="flex h-[22px] w-full items-center justify-between pr-3 pl-[34px]">
          Replace Theme
          <svg viewBox="0 0 5 8" className="h-2 w-[5px]" aria-hidden="true">
            <path d="M0 0v8l5-4z" fill="#000" />
          </svg>
        </button>
        <button role="menuitem" className="flex h-[22px] w-full items-center pl-[34px]">
          Add Theme...
        </button>
        <hr className="my-1 ml-7 border-[#dcdcdc]" />
        <button
          role="menuitem"
          disabled
          className="flex h-[22px] w-full items-center pl-[34px] whitespace-nowrap text-[#787878]"
        >
          Remove Current Theme
        </button>
      </div>
      <svg viewBox="0 0 14 20" className="absolute top-8 left-28 h-5 w-3.5" aria-hidden="true">
        <path d="M1 1v15l3.500-3.300L7 18.500l2.700-1.200L7.200 12H12z" fill="#fff" stroke="#1f2a44" />
      </svg>
    </div>
  );
}

type Layer = { kind: "raster" | "fill" | "black" | "value"; name: string; open?: boolean; selected?: boolean };

const layers: Layer[] = [
  { kind: "raster", name: "", open: true, selected: true },
  { kind: "black", name: "" },
  { kind: "value", name: "" },
  { kind: "fill", name: "" },
  { kind: "raster", name: "" },
  { kind: "raster", name: "", open: true },
  { kind: "black", name: "" },
  { kind: "value", name: "" },
  { kind: "raster", name: "" },
  { kind: "raster", name: "", open: true },
  { kind: "black", name: "-3" },
  { kind: "value", name: "723" },
  { kind: "raster", name: "N08E079", open: true },
  { kind: "black", name: "-4" },
  { kind: "value", name: "102" },
];

function LayerRow({ layer }: { layer: Layer }) {
  if (layer.kind === "black")
    return (
      <li className="flex h-5 items-center gap-1.5 pl-[43px]">
        <span className="size-4 bg-black" />
        {layer.name}
      </li>
    );
  if (layer.kind === "value") return <li className="flex h-5 items-center pl-16">{layer.name}</li>;
  return (
    <li className="flex h-5 items-center pl-[7px]">
      <span className="flex w-[13px]">{layer.open && <Twist open />}</span>
      <span
        className={`flex h-5 flex-1 items-center gap-1.5 rounded-l-xs border pl-0.5 text-[12px] font-bold ${
          layer.selected
            ? "border-dotted border-[#24406a] bg-linear-to-b from-[#e9f3fe] to-[#cde1fa]"
            : "border-transparent"
        }`}
      >
        <TickBox label={`Toggle ${layer.name || "layer"}`} />
        {layer.kind === "raster" ? (
          <Icon size="sm">
            <RasterGlyph />
          </Icon>
        ) : (
          <span className="size-4 border border-[#5b2325] bg-[#b7484b]" />
        )}
        {layer.name}
      </span>
    </li>
  );
}

function LayersPanel() {
  const [open, setOpen] = useState(true);
  return (
    <section className="mt-[5px] flex min-h-0 flex-1 flex-col">
      <PanelHeader title="Layers" />
      <div className="flex h-[27px] shrink-0 items-center pl-px">
        <SmallTool label="Layer styling">
          <path d="m9 8 5.500-6" stroke="#a8652a" strokeWidth="2.400" />
          <path d="m7 6 4.500 4L9.500 12 5 8z" fill="#e8d8b0" stroke="#9a7b4a" strokeWidth=".7" />
          <path d="M.5 7.500 6 7l3 3z" fill="#e4442c" />
          <path d="M1 8.500 9 10l-1 2.500z" fill="#f6c32c" />
          <path d="m2 11.500 6 .5-1 2.500z" fill="#4c84c8" />
        </SmallTool>
        <SmallTool label="Add group">
          <path d="M4.500 5.500h-3v9h6M7.500 3.500h-3v9h6" stroke="#888" />
          <path d="M7.500 3.500h6v8h-6z" fill="#f4f4f4" stroke="#666" />
          <path d="M9.500 9V2.500a1.500 1.500 0 0 1 2.500 0V8" stroke="#777" />
          <rect x="9.500" y="9.500" width="6" height="6" fill="#4f9158" />
          <path d="M12.500 10.500v4M10.500 12.500h4" stroke="#fff" />
        </SmallTool>
        <div className="relative flex w-[23px] justify-center">
          <button
            aria-label="Manage map themes"
            aria-haspopup="menu"
            aria-expanded={open}
            onClick={() => setOpen(!open)}
            className="flex h-5 w-[23px] items-center justify-center rounded-xs border border-[#5f5f5f] bg-[#d4d4d4] shadow-[inset_0_0_2px_#888]"
          >
            <Icon size="sm">
              <EyeGlyph />
              <path d="M10 12h6l-3 3.500z" fill="#000" />
            </Icon>
          </button>
          {open && <ThemeMenu />}
        </div>
        <SmallTool label="Filter legend">
          <Funnel />
        </SmallTool>
        <SmallTool label="Filter by expression" dim>
          <Epsilon size={13} />
          <path d="M8.500 8.500h6v6h-2v-3h-2v3h-2z" fill="#ccc" stroke="#888" />
        </SmallTool>
        <More label="Expression filter options" dim />
        <SmallTool label="Expand all">
          <TreeArrow up={false} />
        </SmallTool>
        <SmallTool label="Collapse all layers">
          <TreeArrow up />
        </SmallTool>
        <SmallTool label="Remove layer">
          <rect x="1.500" y="1.500" width="12" height="11" fill="#f3f3f3" stroke="#777" />
          <rect x="9" y="10" width="7" height="5" rx="1.500" fill="#dc3b3b" />
          <path d="M10.500 12.500h4" stroke="#fff" strokeWidth="1.200" />
        </SmallTool>
      </div>
      <div className="flex min-h-0 flex-1 border border-[#828790] bg-white">
        <ul className="min-w-0 flex-1 overflow-hidden pt-px">
          {layers.map((layer, i) => (
            <LayerRow key={i} layer={layer} />
          ))}
        </ul>
        <div className="flex w-[17px] shrink-0 flex-col items-center bg-[#f0f0f0]">
          <ScrollArrow dir="up" />
          <div className="mt-0.5 flex h-[110px] w-[15px] flex-col items-center justify-center gap-0.5 rounded-xs border border-[#979797] bg-linear-to-r from-[#f6f6f6] to-[#cbcbcb]">
            <i className="h-px w-1.5 bg-[#555]" />
            <i className="h-px w-1.5 bg-[#555]" />
            <i className="h-px w-1.5 bg-[#555]" />
          </div>
          <div className="flex-1" />
          <ScrollArrow dir="down" />
        </div>
      </div>
    </section>
  );
}

/* ---------- map canvas ---------- */

const mainland =
  "M340 110H578L578 124 581 129 575 135 570 143 563 153 559 159 551 167 550 171 545 178 544 190 549 197 557 205 565 207 580 207 587 203 588 205 588 210 600 220 598 222 585 212 572 209 563 211 550 208 545 211 537 212 531 215 525 217 518 218 515 222 497 225 488 229 481 235 473 241 468 251 467 262 471 261 469 263 465 267 462 273 463 280 462 291 457 297 455 303 442 310 425 322 423 324 405 328 402 333 395 334 378 329 375 326 368 322 358 313 340 301Z";

const island =
  "M657 152 672 152 675 151 681 150 685 152 687 158 693 163 699 170 705 175 712 180 720 186 727 192 733 200 738 204 743 208 746 217 748 225 753 231 757 237 762 244 767 250 773 256 777 260 781 265 786 272 788 282 784 284 783 291 791 293 793 289 797 287 800 293 801 300 803 307 806 317 809 323 812 333 817 339 822 345 823 357 830 363 835 367 840 372 843 377 846 383 847 392 850 402 853 412 853 430 854 445 852 458 850 467 847 477 843 487 838 496 833 502 823 510 813 517 806 523 797 530 785 535 773 538 758 542 743 547 736 553 732 556 724 557 718 559 710 557 700 556 690 552 680 549 673 544 667 538 663 530 660 520 657 513 655 507 654 500 653 493 648 482 643 470 641 460 641 453 643 445 641 433 638 415 637 400 636 385 635 367 632 355 630 345 627 338 626 330 626 320 630 317 631 310 634 307 635 301 637 303 636 310 633 316 634 324 632 329 635 333 632 337 634 342 638 342 638 329 639 312 640 297 643 285 648 282 650 275 652 267 649 257 650 243 656 237 663 233 666 224 668 217 668 205 663 202 663 195 675 190 677 184 671 178 664 176 663 173 672 176 680 181 686 186 697 185 706 183 697 182 688 177 683 172 678 170 673 172 667 170 664 167 657 165Z";

const ridges =
  "M722 362l1 22-4 12 3 14M732 378l3 12 8 6 2 12 8 4M746 349l-6 18-3 8M750 366l-1 20M712 402l10 8-8 8 6 14M754 405l3 16-4 8M770 425l6 12 8 6-4 16M700 440l14-6 8 4M705 462l20 6 24 0 20-4M694 482l12 14 16 8 14 2M700 502l10 10 16 4M714 530l10-10 12-4M730 395l10 14-2 16M740 430l4 22";

function MapCanvas() {
  return (
    <svg className="size-full" role="img" aria-label="Map canvas">
      <defs>
        <filter id="terrain" x="-20%" y="-20%" width="140%" height="140%" colorInterpolationFilters="sRGB">
          <feTurbulence type="fractalNoise" baseFrequency="0.09 0.06" numOctaves="5" seed="8" result="n" />
          <feGaussianBlur in="SourceGraphic" stdDeviation="3.500" result="b" />
          <feDisplacementMap in="b" in2="n" scale="40" xChannelSelector="R" yChannelSelector="G" result="d" />
          <feTurbulence type="fractalNoise" baseFrequency="0.2 0.14" numOctaves="4" seed="21" result="m" />
          <feColorMatrix
            in="m"
            type="matrix"
            values="3 0 0 0 -1  3 0 0 0 -1  3 0 0 0 -1  0 0 0 0 1"
            result="g"
          />
          <feComposite in="d" in2="g" operator="arithmetic" k1="0.600" k2="0.600" k3="0" k4="0" />
        </filter>
        <filter id="relief" x="-20%" y="-20%" width="140%" height="140%">
          <feTurbulence type="fractalNoise" baseFrequency="0.12" numOctaves="4" seed="3" result="n" />
          <feDisplacementMap in="SourceGraphic" in2="n" scale="14" xChannelSelector="R" yChannelSelector="G" />
        </filter>
        <clipPath id="coast">
          <path d={island} />
        </clipPath>
      </defs>
      <g transform="translate(-346 -120)">
        <rect x="552" y="133" width="315" height="522" fill="#b2b2b2" />
        <path d={mainland} fill="#b7484b" stroke="#2b2b2b" />
        <g fill="#ff0" stroke="#55551a">
          <path d="m657 152-4 0-4 6 3 5 5 4z" />
          <path d="m645 158-3 2-1 6 2 5 5 2 6-1-5-4-2-6z" />
          <path d="m621 180 2 0 6 4-1 3-6 0z" />
          <path d="M626 227c8-1 18 2 23 10-6-1-14-5-22-8z" />
        </g>
        <path d={island} fill="#040404" stroke="#1c1c06" shapeRendering="crispEdges" />
        <g clipPath="url(#coast)">
          <g filter="url(#terrain)">
            <path
              d="M718 356l20 0 16 30 12 20 12 28 20 6 20-26 14 6-18 40-14 14-30 20-40 12-30 26-24-6-18-44-8-30 8-40 24-24 24-16z"
              fill="#141414"
            />
            <path d="M718 372l8 0 4 20 16 10 14 16 20 12 10 24-16 14-38 8-30-2-14-18 8-26 14-26z" fill="#363636" />
            <path d="M734 380l14 12 14 24-4 10-20-14z" fill="#7a7a7a" />
            <path d="M704 430l26-10 18 14 26-18 12 28-20 22-36 8-28-4-12-18z" fill="#686868" />
            <path d="M702 458l24-10 10-18 14 16 20 4-2 18-30 6-34-4z" fill="#a8a8a8" />
            <path d="M736 436l12 4 3 28-22 0z" fill="#fff" />
            <path d="M688 486l22 10 24 6 6 14-16 14-14-8-18-20z" fill="#565656" />
            <path d="M712 478l26 0 10 8-20 6z" fill="#303030" />
            <path d="M800 400l12 6 6 14-10 0zM796 440l10 6-2 12z" fill="#2c2c2c" />
          </g>
          <g filter="url(#relief)" fill="none">
            <path d={ridges} stroke="#fff" strokeOpacity=".25" strokeWidth="1.400" />
            <path
              d="M712 440c12 2 14 12 24 20M726 424l12 12M742 420l16 20M756 446l12 8M690 470c10 20 26 28 44 28M686 484c8 18 22 26 38 28M704 412l20 22M764 412l8 20M680 470c4 20 16 36 34 46"
              stroke="#000"
              strokeOpacity=".5"
              strokeWidth="1.200"
            />
            <path
              d="M683 478c6 16 18 24 36 26M690 478c8 14 20 20 36 22M694 496c8 12 18 18 32 18M700 518c8 4 16 4 26 0M802 410l4 14M812 396l6 10M790 412l-2 20M672 440l6 10M806 452l4 8M796 470l6 6M690 398l2 14M676 420l4 16M724 330l2 8"
              stroke="#b0b0b0"
              strokeOpacity=".28"
            />
          </g>
        </g>
        <g fill="none" stroke="#ff0" shapeRendering="crispEdges">
          <path
            d="M672 153l14 4 12 12 22 15 12 12 12 14M663 174l10 4 6-2M662 169l10 3 4 8M675 171l14 8 10 4 10-1 8 4"
            strokeDasharray="2 2 1 3 4 2"
          />
          <path
            d="M748 222l10 12 14 20M752 235l4 6M776 288l8-4 3-6M800 294l3 20 6 16 9 14 3 14 8 6 10 8 4 14"
            strokeDasharray="2 5 1 3 3 6"
          />
          <path d="M803 320l7 12 10 14 2 10 12 10M815 358l4 4 0 4" strokeDasharray="3 2 1 1 4 2" />
          <path d="M853 410l0 46-3 14M850 425l3 6" strokeDasharray="14 2 6 3" strokeWidth="1.500" />
          <path
            d="M848 470l-6 20-9 14-8 6M640 400l1 28-1 10M648 282l-6 2M628 322l4-8 2-6M632 346l6 0"
            strokeDasharray="4 6 2 9"
          />
          <path
            d="M640 430l3 28M658 483l1 0M660 507l1 0M666 507l1 0M676 513l1 0M670 536l1 0M680 541l1 0M711 556l1 0M754 540l1 0M771 535l1 0M650 457l1 0M679 192l1 0"
            strokeDasharray="1 7"
          />
        </g>
        <g fill="none" stroke="#b2b2b2">
          <path d="m825 367 4 4 5 3 6 8 2 10 4 8" strokeOpacity=".7" strokeDasharray="2 3 1 2" />
          <path d="m737 205 4 3M752 233l3 4 3 4-4 0M778 285l6 5" strokeWidth="1.500" strokeDasharray="2 1" />
        </g>
        <g fill="#050505">
          <path d="M658 186h2v3h-2zM656 207h3v2h-3zM636 299h2v2h-2zM634 304h3v3h-3zM644 236l4 2 3 6-3 2z" />
        </g>
      </g>
    </svg>
  );
}

/* ---------- status bar ---------- */

function Spin({ id, label, value }: { id: string; label: string; value: string }) {
  return (
    <div className="flex items-center gap-1">
      <label htmlFor={id}>{label}</label>
      <div className="flex h-5 w-[79px] items-center border border-[#e3e6ea] bg-white pr-px">
        <input id={id} defaultValue={value} className="min-w-0 flex-1 pl-0.5 outline-none" />
        <div className="flex h-4 w-3.5 flex-col border border-[#b5b5b5] bg-[#f2f2f2]">
          <button
            aria-label={`Increase ${label}`}
            className="flex flex-1 items-center justify-center border-b border-[#b5b5b5]"
          >
            <svg viewBox="0 0 5 3" className="h-[3px] w-[5px]" aria-hidden="true">
              <path d="M0 3h5L2.500 0z" fill="#3a5fa8" />
            </svg>
          </button>
          <button aria-label={`Decrease ${label}`} className="flex flex-1 items-center justify-center">
            <svg viewBox="0 0 5 3" className="h-[3px] w-[5px]" aria-hidden="true">
              <path d="M0 0h5L2.500 3z" fill="#3a5fa8" />
            </svg>
          </button>
        </div>
      </div>
    </div>
  );
}

function StatusBar() {
  return (
    <footer className="flex h-[27px] shrink-0 items-center gap-[9px] pt-px pl-1 whitespace-nowrap">
      <label className="flex h-5 w-[200px] shrink-0 items-center gap-1.5 rounded-xs border border-[#d5d8dc] bg-white pl-[7px]">
        <svg viewBox="0 0 14 14" className="size-3.5" fill="none" stroke="#888" aria-hidden="true">
          <circle cx="6" cy="5.500" r="4.500" />
          <path d="m9 9 4 4" strokeWidth="1.500" />
        </svg>
        <input
          aria-label="Locate"
          placeholder="Type to locate (Ctrl+K)"
          className="min-w-0 flex-1 outline-none placeholder:text-[#808080]"
        />
      </label>
      <span>1 feature(s)</span>
      <div className="flex items-center gap-1">
        <label htmlFor="coord">Coordinate</label>
        <input id="coord" defaultValue="77.056,8.449" className="h-5 w-20 border border-[#e3e6ea] bg-white px-1" />
        <button aria-label="Toggle extents">
          <svg viewBox="0 0 16 16" className="size-4" fill="none" aria-hidden="true">
            <ellipse
              cx="9"
              cy="10"
              rx="5.500"
              ry="3.600"
              fill="#e5e5e5"
              stroke="#333"
              transform="rotate(-40 9 10)"
            />
            <path d="m6 8 5 6M8.500 6l5 6" stroke="#333" strokeWidth=".9" />
            <path d="M1.500 3.500c2-2 4-2 6 0l2 3-4 3.500c-2-1-4-4-4-6.500z" fill="#555" stroke="#222" strokeWidth=".8" />
            <path d="m3 3 4 5M5 2l4 5M11 5l3.500-4M12 3l3 1" stroke="#ddd" strokeWidth=".8" />
            <path d="m11 5 3.500-4" stroke="#333" />
          </svg>
        </button>
      </div>
      <div className="flex items-center gap-1">
        <label htmlFor="scale">Scale</label>
        <div className="grid items-center">
          <select
            id="scale"
            className="col-start-1 row-start-1 h-5 w-[77px] appearance-none border border-[#e3e6ea] bg-white pl-[3px]"
          >
            <option>1:3671319</option>
          </select>
          <svg
            viewBox="0 0 8 5"
            className="pointer-events-none col-start-1 row-start-1 mr-1 h-1 w-[7px] justify-self-end"
            aria-hidden="true"
          >
            <path d="M0 0h8L4 5z" fill="#000" />
          </svg>
        </div>
      </div>
      <div className="flex items-center gap-1.5">
        <button aria-label="Lock scale">
          <svg viewBox="0 0 14 16" className="h-4 w-3.5" fill="none" aria-hidden="true">
            <path d="M3.500 8V5a3.500 3.500 0 0 1 7 0v3" stroke="#666" strokeWidth="1.800" />
            <rect x="1" y="7" width="12" height="8" rx="1" fill="#5a5a5a" />
          </svg>
        </button>
        <Spin id="mag" label="Magnifier" value="100%" />
      </div>
      <Spin id="rot" label="Rotation" value="0.0 °" />
      <TickBox label="Render" text="Render" />
      <button className="ml-2 flex items-center gap-0.5">
        <svg viewBox="0 0 16 16" className="size-4" fill="none" stroke="#666" aria-hidden="true">
          <path d="M8 1.500 15 7l-2.500 5L8 14.500 3.500 12 1 7z" fill="#ccc" strokeWidth=".6" />
          <path
            d="M1 7h14M2.500 10.500h11M3.500 4.500h9M8 1.500v13M5 3.500c-1.500 3-1 7 1 10M11 3.500c1.500 3 1 7-1 10"
            strokeWidth=".8"
          />
        </svg>
        EPSG:4326
      </button>
      <button aria-label="Messages" className="ml-1.5">
        <svg viewBox="0 0 17 16" className="h-4 w-[17px]" aria-hidden="true">
          <path
            d="M8.500 1C3.500 1 .5 3.500.5 6.500s3 5.500 7.500 5.500h3l2.500 3v-4c2-1 3-2.500 3-4.500 0-3-3-5.500-8-5.500z"
            fill="#555"
          />
          <path d="M3.800 6.500h1.900M7.500 6.500h1.900M11.200 6.500h1.900" stroke="#fff" strokeWidth="1.900" />
        </svg>
      </button>
      <svg viewBox="0 0 9 9" className="mr-0.5 ml-auto size-[9px] self-end" fill="#a8a8a8" aria-hidden="true">
        <path d="M7 0h1v1H7zM4 3h1v1H4zM7 3h1v1H7zM1 6h1v1H1zM4 6h1v1H4zM7 6h1v1H7z" />
      </svg>
    </footer>
  );
}

export default function App() {
  return (
    <div className="h-screen w-full bg-[#3a3d42]">
      <div className="flex h-full w-full flex-col overflow-hidden rounded-t-lg rounded-b border border-[#1c2630] bg-[linear-gradient(115deg,#dcebfb_0,#c3dffa_120px,#b9dcfb_330px,#afd2f6_335px,#b3d7fa_560px,#bcdffd_730px,#a9cce8_830px,#cfe6fc_860px,#bcdcf9_1100px)] px-1.5 pb-1.5 font-['Open_Sans','Noto_Sans',sans-serif] text-[12px] leading-4 text-black">
        <TitleBar />
        <div className="flex min-h-0 flex-1 flex-col border border-[#4f6b86] bg-[#f0f0f0]">
          <MenuBar />
          <MainToolbar />
          <EditToolbar />
          <div className="flex min-h-0 flex-1 flex-col text-[11px]">
            <main className="flex min-h-0 flex-1">
              <div className="mr-1 flex w-[333px] shrink-0 flex-col pt-px">
                <BrowserPanel />
                <LayersPanel />
              </div>
              <div className="min-w-0 flex-1 overflow-hidden border border-[#828790] bg-white">
                <MapCanvas />
              </div>
            </main>
            <StatusBar />
          </div>
        </div>
      </div>
    </div>
  );
}
